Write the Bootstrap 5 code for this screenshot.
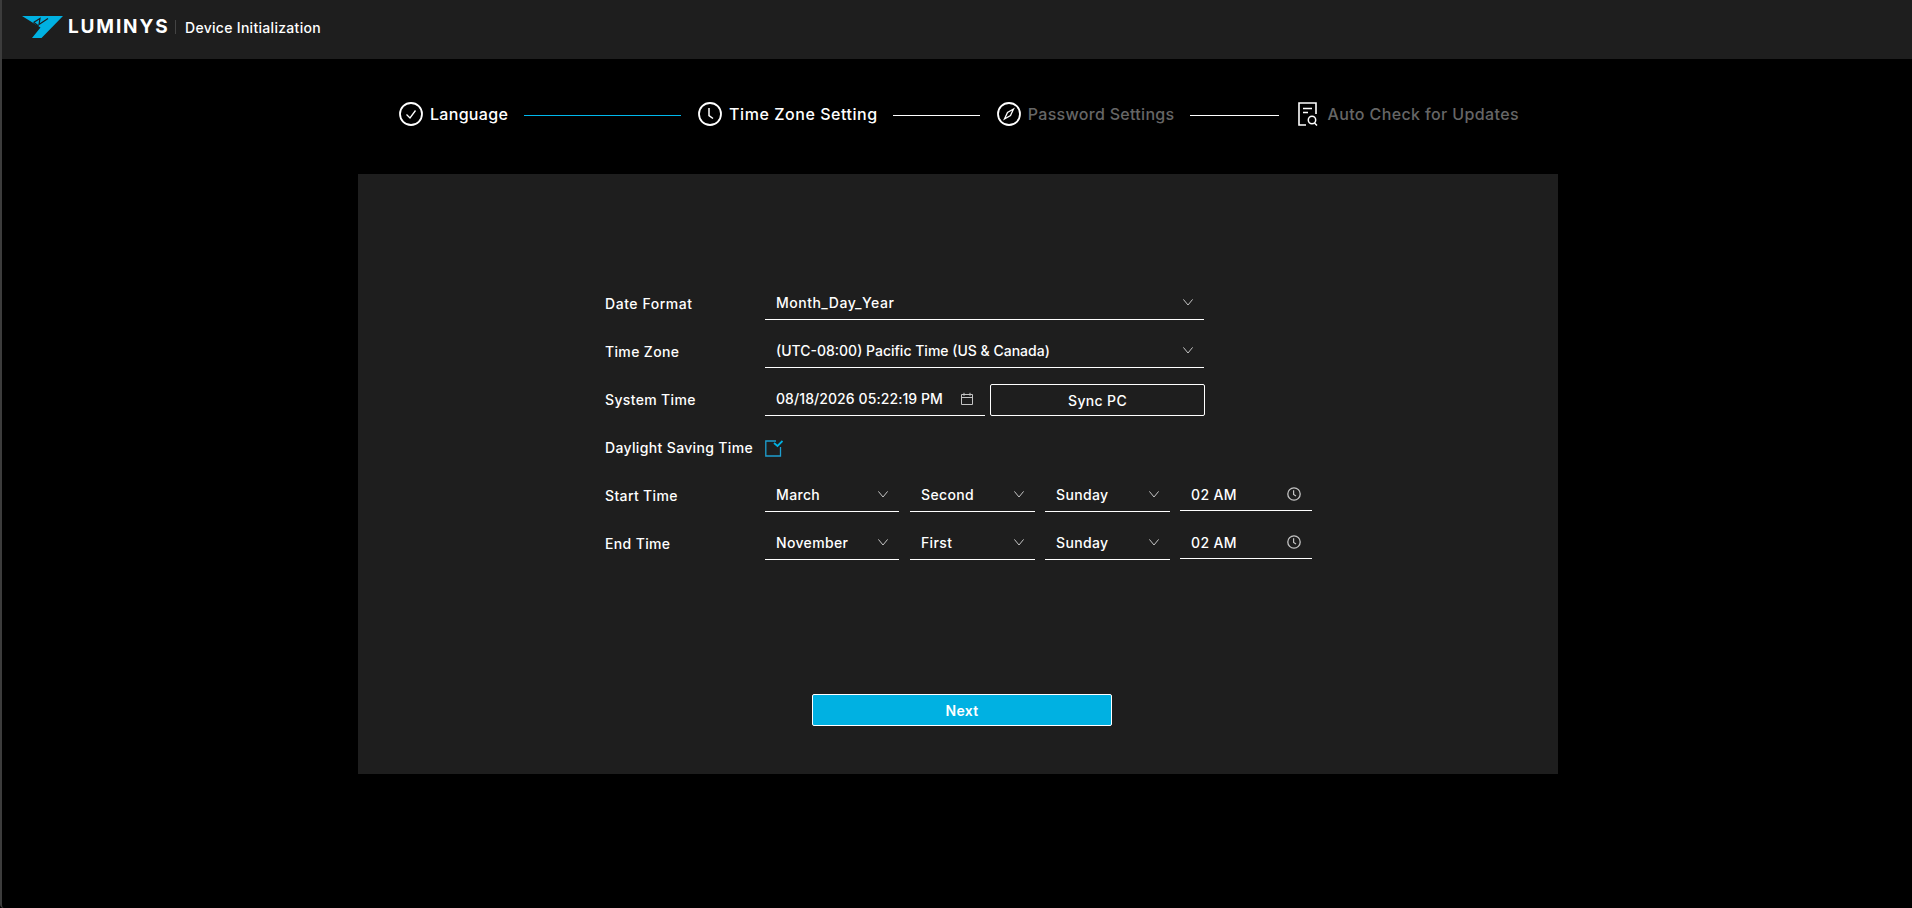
<!DOCTYPE html>
<html lang="en">
<head>
    <meta charset="UTF-8">
    <title>Device Initialization</title>
    <link href="https://cdn.jsdelivr.net/npm/bootstrap@5.3.0/dist/css/bootstrap.min.css" rel="stylesheet">
    <style>
        html, body { height: 100%; }
        body {
            background: #000;
            color: #fff;
            font-family: Inter, "Noto Sans", sans-serif;
            font-size: 14px;
            font-weight: 500;
            letter-spacing: .35px;
            overflow: hidden;
        }
        .app-shell { min-height: 908px; border-left: 2px solid #3c3c3c; border-bottom-left-radius: 4px; }
        .app-header { height: 59px; background: #1e1e1e; padding: 0 0 5px 20px; }
        .brand-name { font-size: 19px; font-weight: 700; letter-spacing: 1.85px; margin-left: 5px; width: 107px; }
        .brand-sep { width: 1px; height: 14px; background: #444; margin-right: 9px; }
        .brand-title { letter-spacing: .3px; }
        .app-main { padding-left: 2px; }
        .page-col { width: 1200px; margin: 0 auto; }
        .stepper { height: 115px; padding: 0 0 5px 41px; font-size: 16px; letter-spacing: .55px; }
        .step-first { letter-spacing: .3px; }
        .step-off { color: #666; letter-spacing: .3px; }
        .step-off-wide { letter-spacing: .38px; }
        .step-line { height: 1px; background: #fff; margin: 2px 16px 0; }
        .step-line-done { width: 157px; margin-right: 17px; background: #00b8ec; }
        .step-line-mid { width: 87px; margin-left: 15px; margin-right: 17px; }
        .step-line-end { width: 89px; margin-right: 17px; }
        .step-ic { flex: none; margin-right: 7px; }
        .setup-panel { height: 600px; background: #1e1e1e; padding: 106px 246px 0 247px; }
        .form-row { height: 48px; }
        .form-lab { width: 160px; flex: none; padding-bottom: 1px; }
        .lab-wide { letter-spacing: .55px; }
        .field { height: 32px; border-bottom: 1px solid #fff; padding: 0 11px 2px; }
        .field-w1 { width: 439px; }
        .field-date { width: 220px; margin-right: 5px; }
        .field-s { width: 134px; margin-right: 11px; }
        .field-s2 { width: 125px; margin-right: 10px; }
        .field-t { width: 132px; height: 31px; margin-bottom: 1px; }
        .val-wide { letter-spacing: .5px; }
        .val-tight { letter-spacing: .08px; }
        .val-tz { letter-spacing: 0; }
        .sync-btn {
            width: 215px; height: 32px; padding: 0;
            background: transparent; color: #fff; border: 1px solid #fff; border-radius: 2px;
            font-size: 14px; font-weight: 500; letter-spacing: .35px;
        }
        .next-btn {
            display: block; width: 300px; height: 32px; padding: 0; margin: 126px 0 0 207px;
            background: #00b1e2; color: #fff; border: 1px solid #fff; border-radius: 2px;
            font-size: 14px; font-weight: 600; letter-spacing: .35px;
        }
        .ic-gray { color: #c4c4c4; }
    </style>
</head>
<body>
    <svg width="0" height="0" class="position-absolute">
        <symbol id="chev" viewBox="0 0 10 7"><path d="M.4.4 5 6 9.6.4" fill="none" stroke="currentColor"/></symbol>
        <symbol id="clk" viewBox="0 0 14 14"><circle cx="7" cy="7" r="6.2" fill="none" stroke="currentColor" stroke-width="1.3"/><path d="M6.6 3.2v4.2l2.4 1.6" fill="none" stroke="currentColor" stroke-width="1.2"/></symbol>
    </svg>
    <div class="app-shell">
        <header class="app-header d-flex align-items-center">
            <svg width="41" height="22" viewBox="0 0 41 22">
                <path d="M0 0H41L19.5 22H10L18.5 11.5Z" fill="#00b1e2"/>
                <path d="M11.5 6.5 18 2.5 17 8.5 26 2.5" fill="none" stroke="#1e1e1e" stroke-width="1.2"/>
                <path d="M12 6.5 16.5 10" fill="none" stroke="#1e1e1e" stroke-width="1.2"/>
            </svg>
            <span class="brand-name">LUMINYS</span>
            <span class="brand-sep"></span>
            <span class="brand-title">Device Initialization</span>
        </header>
        <main class="app-main">
            <div class="page-col">
                <div class="stepper d-flex align-items-center">
                    <svg class="step-ic" width="24" height="24" viewBox="0 0 24 24" fill="none" stroke="#fff"><circle cx="12" cy="12" r="11" stroke-width="1.8"/><path d="M7.5 12.5 11 16 16.5 8.5" stroke-width="1.3"/></svg>
                    <span class="step-first">Language</span>
                    <span class="step-line step-line-done"></span>
                    <svg class="step-ic" width="24" height="24" viewBox="0 0 24 24" fill="none" stroke="#fff"><circle cx="12" cy="12" r="11" stroke-width="1.8"/><path d="M11 6v7.5l4 3" stroke-width="1.5"/></svg>
                    <span>Time Zone Setting</span>
                    <span class="step-line step-line-mid"></span>
                    <svg class="step-ic" width="24" height="24" viewBox="0 0 24 24" fill="none" stroke="#fff"><circle cx="12" cy="12" r="11" stroke-width="1.8"/><path d="M16.5 7 13.5 13.5 7.5 17 10.5 10.5Z" stroke-width="1.3"/></svg>
                    <span class="step-off">Password Settings</span>
                    <span class="step-line step-line-end"></span>
                    <svg class="step-ic" width="24" height="24" viewBox="0 0 24 24" fill="none" stroke="#fff"><path d="M20 12V1H3V23H10" stroke-width="1.6"/><path d="M7 6.5H16M7 10.5H12" stroke-width="1.7"/><circle cx="16" cy="18" r="3.7" stroke-width="1.5"/><path d="M18.5 21 21 23.5" stroke-width="1.5"/></svg>
                    <span class="step-off step-off-wide">Auto Check for Updates</span>
                </div>
                <section class="setup-panel">
                    <div class="form-row d-flex align-items-center">
                        <span class="form-lab lab-wide">Date Format</span>
                        <div class="field field-w1 d-flex align-items-center justify-content-between">
                            <span class="val-wide">Month_Day_Year</span>
                            <svg class="ic-gray" width="10" height="7"><use href="#chev"/></svg>
                        </div>
                    </div>
                    <div class="form-row d-flex align-items-center">
                        <span class="form-lab">Time Zone</span>
                        <div class="field field-w1 d-flex align-items-center justify-content-between">
                            <span class="val-tz">(UTC-08:00) Pacific Time (US &amp; Canada)</span>
                            <svg class="ic-gray" width="10" height="7"><use href="#chev"/></svg>
                        </div>
                    </div>
                    <div class="form-row d-flex align-items-center">
                        <span class="form-lab">System Time</span>
                        <div class="field field-date d-flex align-items-center justify-content-between">
                            <span class="val-tight">08/18/2026 05:22:19 PM</span>
                            <svg class="ic-gray" width="14" height="14" viewBox="0 0 14 14" fill="none" stroke="currentColor"><path d="M1.5 2.5h11v10h-11zM1.5 5.5h11M4 .8v3M10 .8v3"/></svg>
                        </div>
                        <button type="button" class="sync-btn">Sync PC</button>
                    </div>
                    <div class="form-row d-flex align-items-center">
                        <span class="form-lab">Daylight Saving Time</span>
                        <svg width="18" height="17" viewBox="0 0 18 17" fill="none"><path d="M11 1H.8V16H15.5V7" stroke="#1e9fd0" stroke-width="1.3"/><path d="M9 3 12.5 6 17.5 1" stroke="#00b1e2" stroke-width="1.8"/></svg>
                    </div>
                    <div class="form-row d-flex align-items-center">
                        <span class="form-lab">Start Time</span>
                        <div class="field field-s d-flex align-items-center justify-content-between"><span>March</span><svg class="ic-gray" width="10" height="7"><use href="#chev"/></svg></div>
                        <div class="field field-s2 d-flex align-items-center justify-content-between"><span>Second</span><svg class="ic-gray" width="10" height="7"><use href="#chev"/></svg></div>
                        <div class="field field-s2 d-flex align-items-center justify-content-between"><span>Sunday</span><svg class="ic-gray" width="10" height="7"><use href="#chev"/></svg></div>
                        <div class="field field-t d-flex align-items-center justify-content-between"><span>02 AM</span><svg class="ic-gray" width="14" height="14"><use href="#clk"/></svg></div>
                    </div>
                    <div class="form-row d-flex align-items-center">
                        <span class="form-lab">End Time</span>
                        <div class="field field-s d-flex align-items-center justify-content-between"><span>November</span><svg class="ic-gray" width="10" height="7"><use href="#chev"/></svg></div>
                        <div class="field field-s2 d-flex align-items-center justify-content-between"><span>First</span><svg class="ic-gray" width="10" height="7"><use href="#chev"/></svg></div>
                        <div class="field field-s2 d-flex align-items-center justify-content-between"><span>Sunday</span><svg class="ic-gray" width="10" height="7"><use href="#chev"/></svg></div>
                        <div class="field field-t d-flex align-items-center justify-content-between"><span>02 AM</span><svg class="ic-gray" width="14" height="14"><use href="#clk"/></svg></div>
                    </div>
                    <button type="button" class="next-btn">Next</button>
                </section>
            </div>
        </main>
    </div>
    <script src="https://cdn.jsdelivr.net/npm/bootstrap@5.3.0/dist/js/bootstrap.bundle.min.js"></script>
</body>
</html>
